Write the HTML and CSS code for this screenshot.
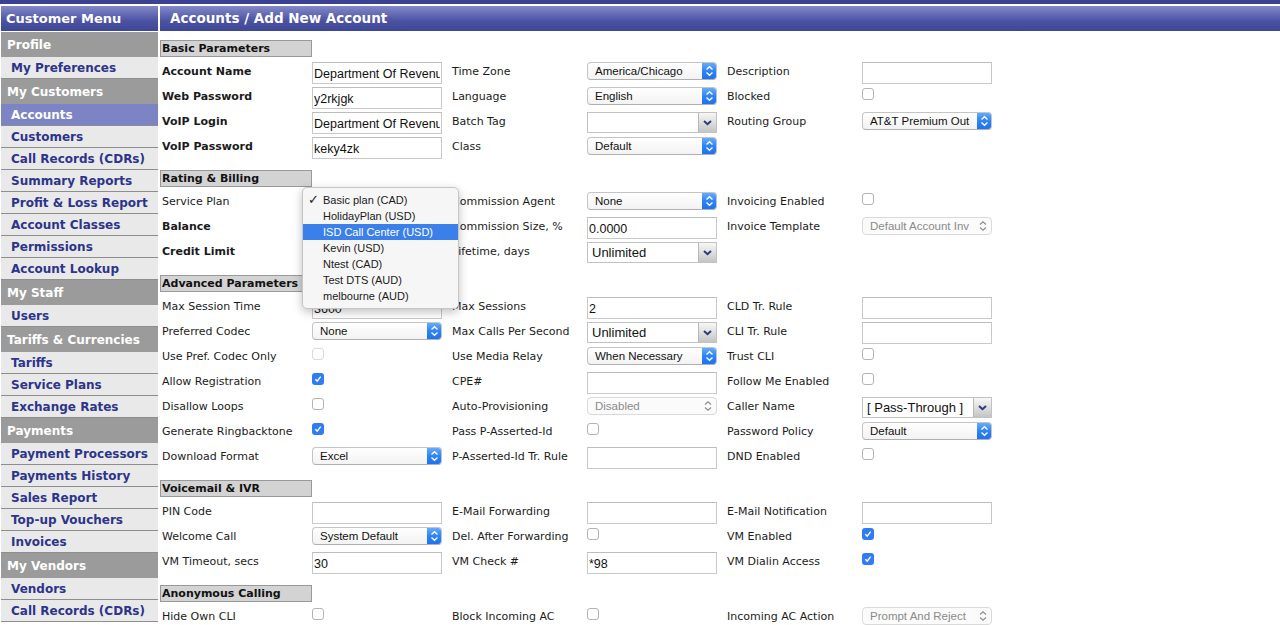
FILE: index.html
```html
<!DOCTYPE html>
<html>
<head>
<meta charset="utf-8">
<title>Accounts / Add New Account</title>
<link rel="stylesheet" href="styles.css">
</head>
<body>
<div class="topbar"></div>
<div class="layout">
  <nav class="sidebar">
    <div class="side-title">Customer Menu</div>
    <div class="side-group">Profile</div>
    <a class="side-item" href="#">My Preferences</a>
    <div class="side-group">My Customers</div>
    <a class="side-item active" href="#">Accounts</a>
    <a class="side-item" href="#">Customers</a>
    <a class="side-item" href="#">Call Records (CDRs)</a>
    <a class="side-item" href="#">Summary Reports</a>
    <a class="side-item" href="#">Profit &amp; Loss Report</a>
    <a class="side-item" href="#">Account Classes</a>
    <a class="side-item" href="#">Permissions</a>
    <a class="side-item" href="#">Account Lookup</a>
    <div class="side-group">My Staff</div>
    <a class="side-item" href="#">Users</a>
    <div class="side-group">Tariffs &amp; Currencies</div>
    <a class="side-item" href="#">Tariffs</a>
    <a class="side-item" href="#">Service Plans</a>
    <a class="side-item" href="#">Exchange Rates</a>
    <div class="side-group">Payments</div>
    <a class="side-item" href="#">Payment Processors</a>
    <a class="side-item" href="#">Payments History</a>
    <a class="side-item" href="#">Sales Report</a>
    <a class="side-item" href="#">Top-up Vouchers</a>
    <a class="side-item" href="#">Invoices</a>
    <div class="side-group">My Vendors</div>
    <a class="side-item" href="#">Vendors</a>
    <a class="side-item" href="#">Call Records (CDRs)</a>
  </nav>

  <main class="main">
    <div class="main-title">Accounts / Add New Account</div>
    <div class="form">

      <section class="sec">
        <div class="sec-head">Basic Parameters</div>
        <div class="grid">
          <div class="lbl first b">Account Name</div>
          <div><input class="inp" type="text" value="Department Of Revenue"></div>
          <div class="lbl">Time Zone</div>
          <div><div class="msel"><span class="msel-txt">America/Chicago</span><span class="msel-btn"><svg width="15" height="18" viewBox="0 0 15 18"><path d="M4.5 7.5 L7.5 4.7 L10.5 7.5 M4.5 10.5 L7.5 13.3 L10.5 10.5" fill="none" stroke="#fff" stroke-width="1.3"/></svg></span></div></div>
          <div class="lbl">Description</div>
          <div><input class="inp" type="text" value=""></div>

          <div class="lbl first b">Web Password</div>
          <div><input class="inp" type="text" value="y2rkjgk"></div>
          <div class="lbl">Language</div>
          <div><div class="msel"><span class="msel-txt">English</span><span class="msel-btn"><svg width="15" height="18" viewBox="0 0 15 18"><path d="M4.5 7.5 L7.5 4.7 L10.5 7.5 M4.5 10.5 L7.5 13.3 L10.5 10.5" fill="none" stroke="#fff" stroke-width="1.3"/></svg></span></div></div>
          <div class="lbl">Blocked</div>
          <div><span class="cb"></span></div>

          <div class="lbl first b">VoIP Login</div>
          <div><input class="inp" type="text" value="Department Of Revenue"></div>
          <div class="lbl">Batch Tag</div>
          <div><div class="gsel"><span class="gsel-txt"></span><span class="gsel-btn"><svg width="17" height="19" viewBox="0 0 17 19"><path d="M5 8 L8.5 11.2 L12 8" fill="none" stroke="#2b3a7e" stroke-width="2"/></svg></span></div></div>
          <div class="lbl">Routing Group</div>
          <div><div class="msel"><span class="msel-txt">AT&amp;T Premium Out</span><span class="msel-btn"><svg width="15" height="18" viewBox="0 0 15 18"><path d="M4.5 7.5 L7.5 4.7 L10.5 7.5 M4.5 10.5 L7.5 13.3 L10.5 10.5" fill="none" stroke="#fff" stroke-width="1.3"/></svg></span></div></div>

          <div class="lbl first b">VoIP Password</div>
          <div><input class="inp" type="text" value="keky4zk"></div>
          <div class="lbl">Class</div>
          <div><div class="msel"><span class="msel-txt">Default</span><span class="msel-btn"><svg width="15" height="18" viewBox="0 0 15 18"><path d="M4.5 7.5 L7.5 4.7 L10.5 7.5 M4.5 10.5 L7.5 13.3 L10.5 10.5" fill="none" stroke="#fff" stroke-width="1.3"/></svg></span></div></div>
          <div></div>
          <div></div>
        </div>
      </section>

      <section class="sec">
        <div class="sec-head">Rating &amp; Billing</div>
        <div class="grid">
          <div class="lbl first">Service Plan</div>
          <div><div class="msel"><span class="msel-txt"></span><span class="msel-btn"><svg width="15" height="18" viewBox="0 0 15 18"><path d="M4.5 7.5 L7.5 4.7 L10.5 7.5 M4.5 10.5 L7.5 13.3 L10.5 10.5" fill="none" stroke="#fff" stroke-width="1.3"/></svg></span></div></div>
          <div class="lbl">Commission Agent</div>
          <div><div class="msel"><span class="msel-txt">None</span><span class="msel-btn"><svg width="15" height="18" viewBox="0 0 15 18"><path d="M4.5 7.5 L7.5 4.7 L10.5 7.5 M4.5 10.5 L7.5 13.3 L10.5 10.5" fill="none" stroke="#fff" stroke-width="1.3"/></svg></span></div></div>
          <div class="lbl">Invoicing Enabled</div>
          <div><span class="cb"></span></div>

          <div class="lbl first b">Balance</div>
          <div><input class="inp" type="text" value=""></div>
          <div class="lbl">Commission Size, %</div>
          <div><input class="inp" type="text" value="0.0000"></div>
          <div class="lbl">Invoice Template</div>
          <div><div class="dsel"><span class="dsel-txt">Default Account Inv</span><svg class="dsel-ico" width="10" height="14" viewBox="0 0 10 14"><path d="M2 5.5 L5 2.7 L8 5.5 M2 8.5 L5 11.3 L8 8.5" fill="none" stroke="#8d8d8d" stroke-width="1.2"/></svg></div></div>

          <div class="lbl first b">Credit Limit</div>
          <div><input class="inp" type="text" value=""></div>
          <div class="lbl">Lifetime, days</div>
          <div><div class="gsel"><span class="gsel-txt">Unlimited</span><span class="gsel-btn"><svg width="17" height="19" viewBox="0 0 17 19"><path d="M5 8 L8.5 11.2 L12 8" fill="none" stroke="#2b3a7e" stroke-width="2"/></svg></span></div></div>
          <div></div>
          <div></div>
        </div>
      </section>

      <section class="sec">
        <div class="sec-head">Advanced Parameters</div>
        <div class="grid">
          <div class="lbl first">Max Session Time</div>
          <div><input class="inp" type="text" value="3600"></div>
          <div class="lbl">Max Sessions</div>
          <div><input class="inp" type="text" value="2"></div>
          <div class="lbl">CLD Tr. Rule</div>
          <div><input class="inp" type="text" value=""></div>

          <div class="lbl first">Preferred Codec</div>
          <div><div class="msel"><span class="msel-txt">None</span><span class="msel-btn"><svg width="15" height="18" viewBox="0 0 15 18"><path d="M4.5 7.5 L7.5 4.7 L10.5 7.5 M4.5 10.5 L7.5 13.3 L10.5 10.5" fill="none" stroke="#fff" stroke-width="1.3"/></svg></span></div></div>
          <div class="lbl">Max Calls Per Second</div>
          <div><div class="gsel"><span class="gsel-txt">Unlimited</span><span class="gsel-btn"><svg width="17" height="19" viewBox="0 0 17 19"><path d="M5 8 L8.5 11.2 L12 8" fill="none" stroke="#2b3a7e" stroke-width="2"/></svg></span></div></div>
          <div class="lbl">CLI Tr. Rule</div>
          <div><input class="inp" type="text" value=""></div>

          <div class="lbl first">Use Pref. Codec Only</div>
          <div><span class="cb dis"></span></div>
          <div class="lbl">Use Media Relay</div>
          <div><div class="msel"><span class="msel-txt">When Necessary</span><span class="msel-btn"><svg width="15" height="18" viewBox="0 0 15 18"><path d="M4.5 7.5 L7.5 4.7 L10.5 7.5 M4.5 10.5 L7.5 13.3 L10.5 10.5" fill="none" stroke="#fff" stroke-width="1.3"/></svg></span></div></div>
          <div class="lbl">Trust CLI</div>
          <div><span class="cb"></span></div>

          <div class="lbl first">Allow Registration</div>
          <div><span class="cb on"><svg width="12" height="12" viewBox="0 0 12 12"><path d="M3.3 6.2 L5.2 8.1 L8.7 3.6" fill="none" stroke="#fff" stroke-width="1.4"/></svg></span></div>
          <div class="lbl">CPE#</div>
          <div><input class="inp" type="text" value=""></div>
          <div class="lbl">Follow Me Enabled</div>
          <div><span class="cb"></span></div>

          <div class="lbl first">Disallow Loops</div>
          <div><span class="cb"></span></div>
          <div class="lbl">Auto-Provisioning</div>
          <div><div class="dsel"><span class="dsel-txt">Disabled</span><svg class="dsel-ico" width="10" height="14" viewBox="0 0 10 14"><path d="M2 5.5 L5 2.7 L8 5.5 M2 8.5 L5 11.3 L8 8.5" fill="none" stroke="#8d8d8d" stroke-width="1.2"/></svg></div></div>
          <div class="lbl">Caller Name</div>
          <div><div class="gsel"><span class="gsel-txt">[ Pass-Through ]</span><span class="gsel-btn"><svg width="17" height="19" viewBox="0 0 17 19"><path d="M5 8 L8.5 11.2 L12 8" fill="none" stroke="#2b3a7e" stroke-width="2"/></svg></span></div></div>

          <div class="lbl first">Generate Ringbacktone</div>
          <div><span class="cb on"><svg width="12" height="12" viewBox="0 0 12 12"><path d="M3.3 6.2 L5.2 8.1 L8.7 3.6" fill="none" stroke="#fff" stroke-width="1.4"/></svg></span></div>
          <div class="lbl">Pass P-Asserted-Id</div>
          <div><span class="cb"></span></div>
          <div class="lbl">Password Policy</div>
          <div><div class="msel"><span class="msel-txt">Default</span><span class="msel-btn"><svg width="15" height="18" viewBox="0 0 15 18"><path d="M4.5 7.5 L7.5 4.7 L10.5 7.5 M4.5 10.5 L7.5 13.3 L10.5 10.5" fill="none" stroke="#fff" stroke-width="1.3"/></svg></span></div></div>

          <div class="lbl first">Download Format</div>
          <div><div class="msel"><span class="msel-txt">Excel</span><span class="msel-btn"><svg width="15" height="18" viewBox="0 0 15 18"><path d="M4.5 7.5 L7.5 4.7 L10.5 7.5 M4.5 10.5 L7.5 13.3 L10.5 10.5" fill="none" stroke="#fff" stroke-width="1.3"/></svg></span></div></div>
          <div class="lbl">P-Asserted-Id Tr. Rule</div>
          <div><input class="inp" type="text" value=""></div>
          <div class="lbl">DND Enabled</div>
          <div><span class="cb"></span></div>
        </div>
      </section>

      <section class="sec">
        <div class="sec-head">Voicemail &amp; IVR</div>
        <div class="grid">
          <div class="lbl first">PIN Code</div>
          <div><input class="inp" type="text" value=""></div>
          <div class="lbl">E-Mail Forwarding</div>
          <div><input class="inp" type="text" value=""></div>
          <div class="lbl">E-Mail Notification</div>
          <div><input class="inp" type="text" value=""></div>

          <div class="lbl first">Welcome Call</div>
          <div><div class="msel"><span class="msel-txt">System Default</span><span class="msel-btn"><svg width="15" height="18" viewBox="0 0 15 18"><path d="M4.5 7.5 L7.5 4.7 L10.5 7.5 M4.5 10.5 L7.5 13.3 L10.5 10.5" fill="none" stroke="#fff" stroke-width="1.3"/></svg></span></div></div>
          <div class="lbl">Del. After Forwarding</div>
          <div><span class="cb"></span></div>
          <div class="lbl">VM Enabled</div>
          <div><span class="cb on"><svg width="12" height="12" viewBox="0 0 12 12"><path d="M3.3 6.2 L5.2 8.1 L8.7 3.6" fill="none" stroke="#fff" stroke-width="1.4"/></svg></span></div>

          <div class="lbl first">VM Timeout, secs</div>
          <div><input class="inp" type="text" value="30"></div>
          <div class="lbl">VM Check #</div>
          <div><input class="inp" type="text" value="*98"></div>
          <div class="lbl">VM Dialin Access</div>
          <div><span class="cb on"><svg width="12" height="12" viewBox="0 0 12 12"><path d="M3.3 6.2 L5.2 8.1 L8.7 3.6" fill="none" stroke="#fff" stroke-width="1.4"/></svg></span></div>
        </div>
      </section>

      <section class="sec">
        <div class="sec-head">Anonymous Calling</div>
        <div class="grid">
          <div class="lbl first">Hide Own CLI</div>
          <div><span class="cb"></span></div>
          <div class="lbl">Block Incoming AC</div>
          <div><span class="cb"></span></div>
          <div class="lbl">Incoming AC Action</div>
          <div><div class="dsel"><span class="dsel-txt">Prompt And Reject</span><svg class="dsel-ico" width="10" height="14" viewBox="0 0 10 14"><path d="M2 5.5 L5 2.7 L8 5.5 M2 8.5 L5 11.3 L8 8.5" fill="none" stroke="#8d8d8d" stroke-width="1.2"/></svg></div></div>
        </div>
      </section>

    </div>
  </main>
</div>

<ul class="popup">
  <li class="opt"><span class="tick">✓</span>Basic plan (CAD)</li>
  <li class="opt">HolidayPlan (USD)</li>
  <li class="opt hl">ISD Call Center (USD)</li>
  <li class="opt">Kevin (USD)</li>
  <li class="opt">Ntest (CAD)</li>
  <li class="opt">Test DTS (AUD)</li>
  <li class="opt">melbourne (AUD)</li>
</ul>
</body>
</html>
```

FILE: styles.css
```css
html, body {
  margin: 0;
  padding: 0;
  background: #ffffff;
}
body {
  font-family: "DejaVu Sans", Verdana, sans-serif;
  font-size: 11px;
  color: #1b1b1b;
  overflow: hidden;
}

.topbar {
  height: 4px;
  background: #3b4193;
  margin-bottom: 2px;
}

.layout {
  display: flex;
  gap: 2px;
  padding-left: 1px;
}

/* ---------- sidebar ---------- */
.sidebar {
  width: 157px;
  flex: none;
}
.side-title {
  height: 25px;
  line-height: 25px;
  padding-left: 5px;
  margin-bottom: 1px;
  background: linear-gradient(#8389c9, #4b52a1 60%, #3e4697);
  color: #fff;
  font-weight: bold;
  font-size: 13px;
}
.side-group {
  box-sizing: border-box;
  height: 25px;
  padding-top: 1px;
  line-height: 24px;
  padding-left: 6px;
  background: #9b9b9b;
  color: #fff;
  font-weight: bold;
  font-size: 12px;
  white-space: nowrap;
}
.side-item {
  display: block;
  box-sizing: border-box;
  height: 22px;
  padding-top: 1px;
  line-height: 20px;
  padding-left: 10px;
  background: #e9e9e9;
  border-bottom: 1px solid #8e8e8e;
  color: #2c348c;
  font-weight: bold;
  font-size: 12px;
  text-decoration: none;
  white-space: nowrap;
}
.side-item.active {
  background: #7c84c6;
  color: #fff;
}

/* ---------- main ---------- */
.main {
  flex: 1;
  min-width: 0;
}
.main-title {
  height: 25px;
  line-height: 25px;
  padding-left: 10px;
  background: linear-gradient(#8389c9, #4b52a1 60%, #3e4697);
  color: #fff;
  font-weight: bold;
  font-size: 13.5px;
}
.form {
  padding-top: 9px;
}
.sec + .sec {
  margin-top: 12px;
}
.sec-head {
  box-sizing: border-box;
  width: 152px;
  height: 17px;
  line-height: 15px;
  padding-left: 1px;
  margin-bottom: 1px;
  border: 1px solid #999;
  background: #d3d3d3;
  font-weight: bold;
  font-size: 11px;
  color: #111;
  white-space: nowrap;
}
.grid {
  display: grid;
  grid-template-columns: 152px 140px 135px 140px 135px 130px;
  grid-auto-rows: 25px;
}
.lbl {
  padding-top: 7px;
  line-height: 14px;
  white-space: nowrap;
  color: #1b1b1b;
}
.lbl.first {
  padding-left: 2px;
}
.lbl.b {
  font-weight: bold;
}

/* text inputs */
.inp {
  display: block;
  box-sizing: border-box;
  width: 130px;
  height: 22px;
  margin: 4px 0 0 0;
  padding: 2px 1px 0 1px;
  border: 1px solid #c9c9c9;
  border-top-color: #bdbdbd;
  background: #fff;
  font-family: "Liberation Sans", Arial, sans-serif;
  font-size: 12.5px;
  color: #111;
  outline: none;
}

/* mac style select */
.msel {
  box-sizing: border-box;
  display: flex;
  width: 130px;
  height: 18px;
  margin-top: 4px;
  border: 1px solid #c4c4c4;
  border-bottom-color: #b0b0b0;
  border-radius: 4px;
  background: linear-gradient(#ffffff, #f3f3f3);
  overflow: hidden;
}
.msel-txt {
  flex: 1;
  padding-left: 7px;
  line-height: 16px;
  font-family: "Liberation Sans", Arial, sans-serif;
  font-size: 11.5px;
  color: #111;
  white-space: nowrap;
  overflow: hidden;
}
.msel-btn {
  width: 15px;
  height: 18px;
  margin: -1px -1px -1px 0;
  background: linear-gradient(#6cb0fb, #2d84f5 50%, #1c6ff0);
  border-radius: 0 4px 4px 0;
  flex: none;
}
.msel-btn svg {
  display: block;
}

/* grey classic select */
.gsel {
  box-sizing: border-box;
  display: flex;
  width: 130px;
  height: 21px;
  margin-top: 4px;
  border: 1px solid #c2c2c2;
  background: #fff;
}
.gsel-txt {
  flex: 1;
  padding-left: 4px;
  line-height: 20px;
  font-family: "Liberation Sans", Arial, sans-serif;
  font-size: 13px;
  color: #111;
  white-space: nowrap;
  overflow: hidden;
}
.gsel-btn {
  flex: none;
  width: 17px;
  height: 19px;
  border-left: 1px solid #b8b8b8;
  background: linear-gradient(#f7f7f7, #dcdcdc 55%, #c4c4c4);
}
.gsel-btn svg {
  display: block;
}

/* disabled select */
.dsel {
  box-sizing: border-box;
  display: flex;
  align-items: center;
  width: 130px;
  height: 18px;
  margin-top: 4px;
  border: 1px solid #dadada;
  border-radius: 4px;
  background: #fbfbfb;
}
.dsel-txt {
  flex: 1;
  padding-left: 7px;
  font-family: "Liberation Sans", Arial, sans-serif;
  font-size: 11.5px;
  color: #8a8a8a;
  white-space: nowrap;
  overflow: hidden;
}
.dsel-ico {
  flex: none;
  margin-right: 3px;
}

/* checkbox */
.cb {
  display: block;
  box-sizing: border-box;
  width: 12px;
  height: 12px;
  margin-top: 5px;
  border: 1px solid #b3b3b3;
  border-radius: 3px;
  background: #fff;
}
.cb.dis {
  border-color: #dcdcdc;
}
.cb.on {
  border: none;
  background: #2f7cf4;
}
.cb svg {
  display: block;
}

/* dropdown overlay */
.popup {
  position: absolute;
  left: 302px;
  top: 187px;
  width: 157px;
  box-sizing: border-box;
  margin: 0;
  padding: 4px 0 4px 0;
  list-style: none;
  background: #f6f6f6;
  border: 1px solid #c6c6c6;
  border-radius: 5px;
  box-shadow: 0 3px 10px rgba(0, 0, 0, 0.25);
}
.opt {
  position: relative;
  height: 16px;
  line-height: 16px;
  padding-left: 20px;
  font-family: "Liberation Sans", Arial, sans-serif;
  font-size: 11px;
  color: #1a1a1a;
  white-space: nowrap;
}
.opt.hl {
  background: #3b80ea;
  color: #fff;
}
.tick {
  position: absolute;
  left: 5px;
  top: 0;
  font-size: 13px;
  font-weight: bold;
  font-family: "DejaVu Sans", sans-serif;
}
```
